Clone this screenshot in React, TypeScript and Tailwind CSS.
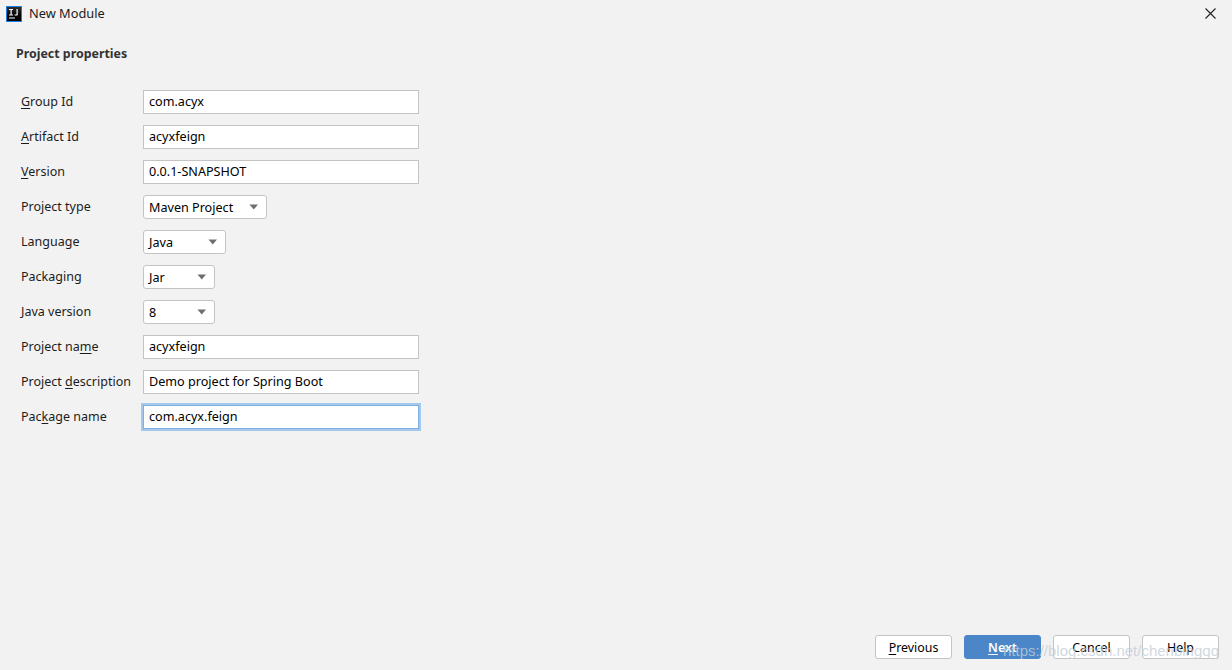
import React from 'react';

const font = "font-['Noto_Sans','Open_Sans',sans-serif]";

function Label({ before = '', mnemonic = '', after }: { before?: string; mnemonic?: string; after: string }) {
  return (
    <div className="w-[127px] pl-[5px] text-[12.5px] leading-[24px] text-[#1c1c1c] whitespace-nowrap">
      {before}
      {mnemonic && <span className="underline underline-offset-2">{mnemonic}</span>}
      {after}
    </div>
  );
}

function TextField({ value, focused }: { value: string; focused?: boolean }) {
  return (
    <div
      className={
        'w-[276px] h-[24px] bg-white pl-[5px] text-[12.6px] leading-[22px] text-black border ' +
        (focused ? 'border-[#7eaee0] shadow-[0_0_0_2px_#a5c8ee]' : 'border-[#c4c4c4]')
      }
    >
      {value}
    </div>
  );
}

function SelectField({ value, width }: { value: string; width: string }) {
  return (
    <div className={width + ' h-[24px] bg-white pl-[5px] pr-[6px] flex items-center justify-between text-[12.6px] leading-[24px] text-black border border-[#c4c4c4] rounded-[3px]'}>
      <span className="pt-[2px]">{value}</span>
      <svg width="10" height="6" viewBox="0 0 10 6" className="mr-[1px]">
        <path d="M0.5 0.5h8.5L4.75 5.5z" fill="#6e6e6e" />
      </svg>
    </div>
  );
}

function Row({ label, children }: { label: React.ReactNode; children: React.ReactNode }) {
  return (
    <div className="flex items-center h-[24px]">
      {label}
      {children}
    </div>
  );
}

function FooterButton({ before = '', mnemonic = '', after, primary }: { before?: string; mnemonic?: string; after: string; primary?: boolean }) {
  return (
    <div
      className={
        'w-[77px] h-[24px] flex items-center justify-center pt-[2px] text-[12.4px] rounded-[3px] border ' +
        (primary ? 'bg-[#4a86c8] border-[#4a86c8] text-white font-semibold' : 'bg-white border-[#c4c4c4] text-black')
      }
    >
      <span>
        {before}
        {mnemonic && <span className="underline underline-offset-2">{mnemonic}</span>}
        {after}
      </span>
    </div>
  );
}

export default function App() {
  return (
    <div className={font + ' relative w-[1232px] h-[670px] bg-[#f2f2f2] overflow-hidden flex flex-col'}>
      {/* Title bar */}
      <div className="h-[28px] flex items-center pl-[6px] pr-[16px] shrink-0">
        <svg width="16" height="16" viewBox="0 0 16 16" className="shrink-0">
          <defs>
            <linearGradient id="ij" x1="0" y1="0" x2="0" y2="1">
              <stop offset="0" stopColor="#333" />
              <stop offset="0.6" stopColor="#000" />
            </linearGradient>
          </defs>
          <rect x="0.5" y="0.5" width="15" height="15" fill="url(#ij)" stroke="#1e7fe0" />
          <rect x="3" y="11.5" width="6" height="1" fill="#fff" />
          <rect x="3" y="3" width="4" height="1" fill="#fff" />
          <rect x="4.5" y="3" width="1.2" height="6" fill="#fff" />
          <rect x="3" y="8.5" width="4" height="1" fill="#fff" />
          <rect x="10.5" y="3" width="1.2" height="6" fill="#fff" />
          <rect x="8.5" y="8.5" width="3" height="1" fill="#fff" />
        </svg>
        <span className="ml-[7px] text-[12.8px] text-[#1c1c1c]">New Module</span>
        <svg width="11" height="11" viewBox="0 0 11 11" className="ml-auto -mt-[2px]">
          <path d="M0.5 0.5l10 10M10.5 0.5l-10 10" stroke="#222" strokeWidth="1.1" />
        </svg>
      </div>

      <div className="pl-[16px] pt-[17px] text-[12.4px] leading-[18px] font-bold text-[#333]">Project properties</div>

      {/* Form */}
      <div className="pl-[16px] pt-[27px] flex flex-col gap-[11px]">
        <Row label={<Label mnemonic="G" after="roup Id" />}><TextField value="com.acyx" /></Row>
        <Row label={<Label mnemonic="A" after="rtifact Id" />}><TextField value="acyxfeign" /></Row>
        <Row label={<Label mnemonic="V" after="ersion" />}><TextField value="0.0.1-SNAPSHOT" /></Row>
        <Row label={<Label after="Project type" />}><SelectField value="Maven Project" width="w-[124px]" /></Row>
        <Row label={<Label after="Language" />}><SelectField value="Java" width="w-[83px]" /></Row>
        <Row label={<Label after="Packaging" />}><SelectField value="Jar" width="w-[72px]" /></Row>
        <Row label={<Label after="Java version" />}><SelectField value="8" width="w-[72px]" /></Row>
        <Row label={<Label before="Project na" mnemonic="m" after="e" />}><TextField value="acyxfeign" /></Row>
        <Row label={<Label before="Project " mnemonic="d" after="escription" />}><TextField value="Demo project for Spring Boot" /></Row>
        <Row label={<Label before="Pac" mnemonic="k" after="age name" />}><TextField value="com.acyx.feign" focused /></Row>
      </div>

      {/* Footer buttons */}
      <div className="mt-auto pb-[11px] pr-[13px] flex justify-end gap-[12px]">
        <FooterButton mnemonic="P" after="revious" />
        <FooterButton mnemonic="N" after="ext" primary />
        <FooterButton after="Cancel" />
        <FooterButton after="Help" />
      </div>

      {/* Watermark */}
      <div className="absolute left-[1003px] top-[641px] text-[15px] leading-[20px] text-[#c4ced8]/80 font-['Liberation_Sans',sans-serif] whitespace-nowrap">
        https://blog.csdn.net/chenbingqq
      </div>
    </div>
  );
}
